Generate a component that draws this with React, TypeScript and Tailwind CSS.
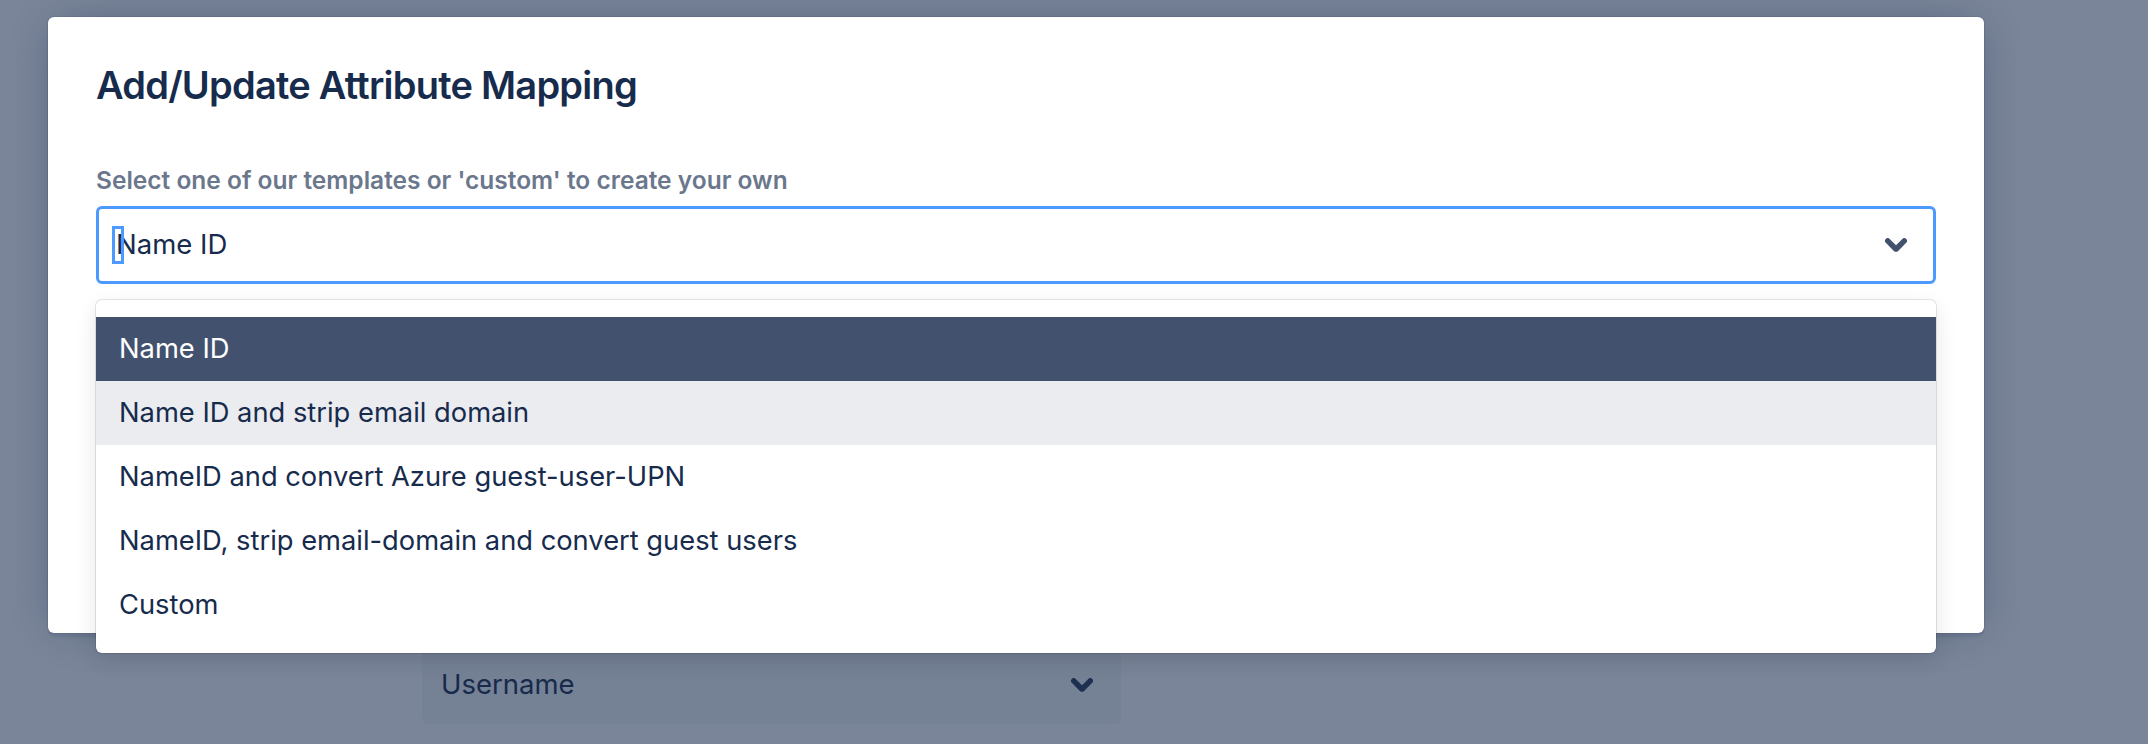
import React from "react";

const options = [
  "Name ID",
  "Name ID and strip email domain",
  "NameID and convert Azure guest-user-UPN",
  "NameID, strip email-domain and convert guest users",
  "Custom",
];

function Chevron({ className }: { className?: string }) {
  return (
    <svg viewBox="8 10 8 5" className={className} fill="currentColor" aria-hidden>
      <path d="M8.292 10.293a1.009 1.009 0 0 0 0 1.419l2.939 2.965c.218.215.5.322.779.322s.556-.107.769-.322l2.93-2.955a1.01 1.01 0 0 0 0-1.419.987.987 0 0 0-1.406 0l-2.298 2.317-2.307-2.327a.99.99 0 0 0-1.406 0z" />
    </svg>
  );
}

export default function App() {
  const selected = 0;
  const hovered = 1;

  return (
    <div className="relative h-[744px] w-full overflow-hidden bg-[#7a8599] font-['Inter','Liberation_Sans',sans-serif]">
      {/* page content behind the blanket */}
      <div className="pl-[422px] pt-[646px]">
        <div className="flex h-[78px] w-[699px] items-center justify-between rounded-[6px] bg-[#758195] pl-[19px] pr-[28px]">
          <span className="text-[27.5px] leading-none text-[#182a4b]">Username</span>
          <Chevron className="h-[14px] w-[22px] text-[#1e3050]" />
        </div>
      </div>

      {/* Modal */}
      <div className="absolute left-[48px] top-[17px] h-[616px] w-[1936px] rounded-[6px] bg-white px-[48px] pt-[49px] shadow-[0_0_0_1px_rgba(9,30,66,0.08),0_4px_2px_rgba(9,30,66,0.08),0_0_40px_-10px_rgba(9,30,66,0.4)]">
        <h1 className="text-[38px] font-semibold leading-[38px] tracking-[-0.02em] text-[#172B4D]">
          Add/Update Attribute Mapping
        </h1>

        <label className="mt-[62px] block text-[24.5px] font-semibold leading-[28px] text-[#6B778C]">
          Select one of our templates or 'custom' to create your own
        </label>

        <div className="relative mt-[12px]">
          <div className="relative flex h-[78px] items-center justify-between rounded-[6px] border-[3px] border-[#4C9AFF] bg-white pl-[17px] pr-[26px]">
            <span className="text-[27.5px] leading-none text-[#172B4D]">Name ID</span>
            <span className="absolute left-[13px] top-[17px] h-[38px] w-[12px] border-[3px] border-[#4C9AFF]" />
            <Chevron className="h-[14px] w-[22px] text-[#42526E]" />
          </div>

          {/* Menu */}
          <div className="absolute left-0 right-0 top-[94px] z-10 rounded-[6px] bg-white pb-[16px] pt-[17px] shadow-[0_0_0_1px_rgba(0,0,0,0.1),0_8px_22px_rgba(0,0,0,0.1)]">
            {options.map((o, i) => (
              <div
                key={o}
                className={
                  i === selected
                    ? "flex h-[64px] items-center bg-[#42526E] pl-[23px] text-[27.3px] leading-none text-white"
                    : i === hovered
                    ? "flex h-[64px] items-center bg-[#EBECF0] pl-[23px] text-[27.3px] leading-none text-[#172B4D]"
                    : "flex h-[64px] items-center pl-[23px] text-[27.3px] leading-none text-[#172B4D]"
                }
              >
                {o}
              </div>
            ))}
          </div>
        </div>
      </div>
    </div>
  );
}
